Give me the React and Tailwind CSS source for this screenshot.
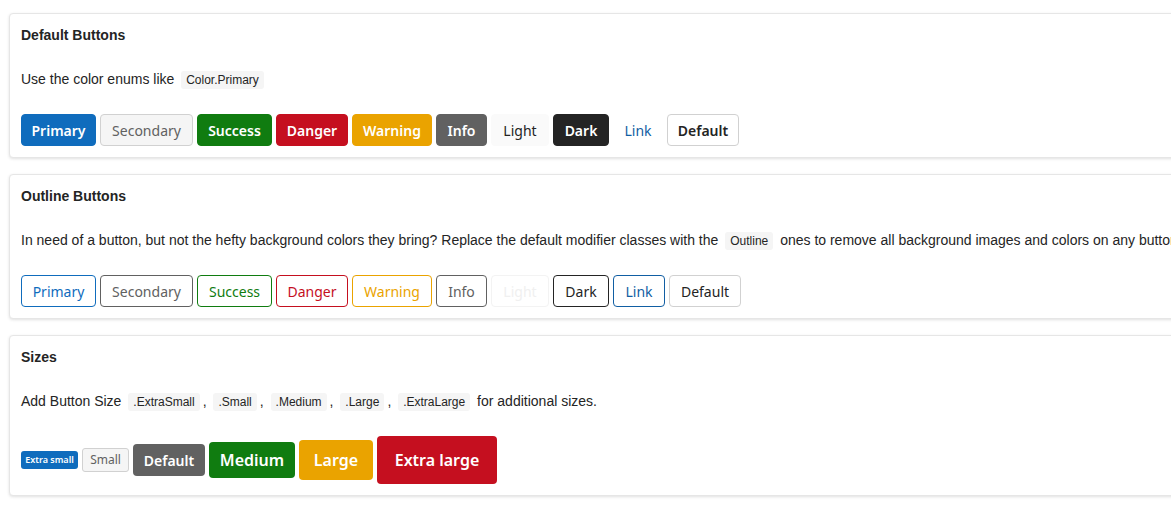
const btnFont = 'font-["Noto_Sans",sans-serif] font-semibold';

const solid = [
  { label: 'Primary', w: 'w-[75px]', cls: 'bg-[#0f6cbd] text-white border-[#0f6cbd]' },
  { label: 'Secondary', w: 'w-[93px]', cls: 'bg-[#f5f5f5] text-[#616161] border-[#d1d1d1] !font-normal' },
  { label: 'Success', w: 'w-[75px]', cls: 'bg-[#107c10] text-white border-[#107c10]' },
  { label: 'Danger', w: 'w-[72px]', cls: 'bg-[#c50f1f] text-white border-[#c50f1f]' },
  { label: 'Warning', w: 'w-[80px]', cls: 'bg-[#eaa300] text-white border-[#eaa300]' },
  { label: 'Info', w: 'w-[51px]', cls: 'bg-[#616161] text-white border-[#616161]' },
  { label: 'Light', w: 'w-[58px]', cls: 'bg-[#fafafa] text-[#242424] border-[#fafafa] !font-normal' },
  { label: 'Dark', w: 'w-[56px]', cls: 'bg-[#242424] text-white border-[#242424]' },
  { label: 'Link', w: 'w-[50px]', cls: 'bg-transparent text-[#115ea3] border-transparent !font-normal' },
  { label: 'Default', w: 'w-[72px]', cls: 'bg-white text-[#242424] border-[#d1d1d1]' },
];

const outline = [
  { label: 'Primary', w: 'w-[75px]', cls: 'text-[#0f6cbd] border-[#0f6cbd]' },
  { label: 'Secondary', w: 'w-[93px]', cls: 'text-[#616161] border-[#616161]' },
  { label: 'Success', w: 'w-[75px]', cls: 'text-[#107c10] border-[#107c10]' },
  { label: 'Danger', w: 'w-[72px]', cls: 'text-[#c50f1f] border-[#c50f1f]' },
  { label: 'Warning', w: 'w-[80px]', cls: 'text-[#eaa300] border-[#eaa300]' },
  { label: 'Info', w: 'w-[51px]', cls: 'text-[#616161] border-[#616161]' },
  { label: 'Light', w: 'w-[58px]', cls: 'text-[#f0f0f0] border-[#f3f3f3]' },
  { label: 'Dark', w: 'w-[56px]', cls: 'text-[#242424] border-[#242424]' },
  { label: 'Link', w: 'w-[52px]', cls: 'text-[#115ea3] border-[#115ea3]' },
  { label: 'Default', w: 'w-[72px]', cls: 'text-[#242424] border-[#d1d1d1]' },
];

function Code({ children }) {
  return (
    <code className='mx-[3px] inline-block rounded-[3px] bg-[#f5f5f5] px-[5px] py-[2px] align-middle font-["Liberation_Sans",Arial,sans-serif] text-[12px] leading-[14px] text-[#242424]'>
      {children}
    </code>
  );
}

function Card({ title, children }) {
  return (
    <div className="w-[1200px] rounded-[4px] border border-[#e6e6e6] bg-white px-[11px] pt-[11px] pb-[11px] shadow-[0_1px_3px_rgba(0,0,0,0.12)]">
      <h3 className="h-5 text-[14px] leading-5 font-bold text-[#242424]">{title}</h3>
      {children}
    </div>
  );
}

function Para({ children }) {
  return <p className="mt-6 h-5 text-[14px] leading-5 whitespace-nowrap text-[#242424]">{children}</p>;
}

export default function App() {
  return (
    <div className='min-h-[505px] w-full overflow-hidden bg-white font-["Liberation_Sans",Arial,sans-serif]'>
      <div className="flex flex-col gap-4 pt-[13px] pl-[9px]">
        <Card title="Default Buttons">
          <Para>
            Use the color enums like <Code>Color.Primary</Code>
          </Para>
          <div className="mt-[25px] flex gap-1">
            {solid.map((b) => (
              <button key={b.label} className={`${btnFont} ${b.w} ${b.cls} h-8 rounded-[4px] border text-[14px]`}>
                {b.label}
              </button>
            ))}
          </div>
        </Card>

        <Card title="Outline Buttons">
          <Para>
            In need of a button, but not the hefty background colors they bring? Replace the default modifier classes with the{' '}
            <Code>Outline</Code> ones to remove all background images and colors on any button.
          </Para>
          <div className="mt-[25px] flex gap-1">
            {outline.map((b) => (
              <button key={b.label} className={`${btnFont} ${b.w} ${b.cls} h-8 rounded-[4px] border bg-white text-[14px] !font-normal`}>
                {b.label}
              </button>
            ))}
          </div>
        </Card>

        <Card title="Sizes">
          <Para>
            Add Button Size <Code>.ExtraSmall</Code>, <Code>.Small</Code>, <Code>.Medium</Code>, <Code>.Large</Code>,{' '}
            <Code>.ExtraLarge</Code> for additional sizes.
          </Para>
          <div className="mt-[25px] flex h-12 items-center gap-1">
            <button className={`${btnFont} h-[18px] w-[57px] rounded-[3px] bg-[#0f6cbd] text-[9px] text-white`}>Extra small</button>
            <button className='h-6 w-[47px] rounded-[3px] border border-[#d1d1d1] bg-[#f5f5f5] font-["Noto_Sans",sans-serif] text-[12px] text-[#616161]'>
              Small
            </button>
            <button className={`${btnFont} h-8 w-[72px] rounded-[4px] bg-[#616161] text-[14px] text-white`}>Default</button>
            <button className={`${btnFont} h-9 w-[86px] rounded-[4px] bg-[#107c10] text-[16px] text-white`}>Medium</button>
            <button className={`${btnFont} h-10 w-[74px] rounded-[4px] bg-[#eaa300] text-[16px] text-white`}>Large</button>
            <button className={`${btnFont} h-12 w-[120px] rounded-[4px] bg-[#c50f1f] text-[16px] text-white`}>Extra large</button>
          </div>
        </Card>
      </div>
    </div>
  );
}
